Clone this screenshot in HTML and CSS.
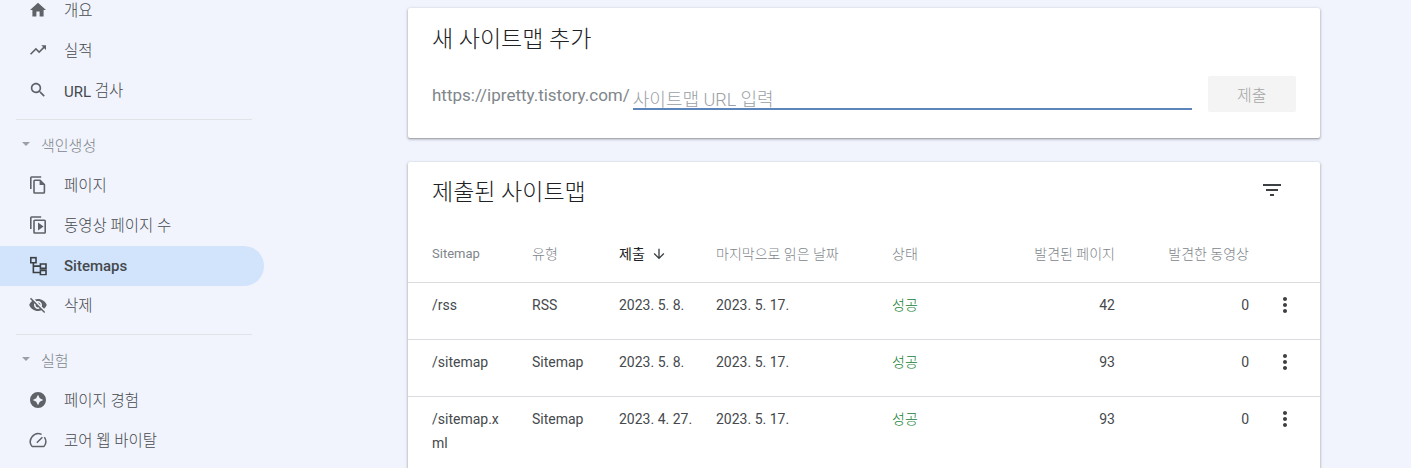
FILE: index.html
```html
<!DOCTYPE html>
<html lang="ko">
<head>
<meta charset="utf-8">
<title>Sitemaps</title>
<link rel="stylesheet" href="styles.css">
</head>
<body>
<div class="page">
  <nav class="sidebar">
    <a class="item"><svg class="icon" viewBox="0 0 24 24"><path d="M10 20v-6h4v6h5v-8h3L12 3 2 12h3v8z"/></svg><span class="label ko">개요</span></a>
    <a class="item"><svg class="icon" viewBox="0 0 24 24"><path d="M16 6l2.29 2.29-4.88 4.88-4-4L2 16.59 3.41 18l6-6 4 4 6.3-6.29L22 12V6z"/></svg><span class="label ko">실적</span></a>
    <a class="item"><svg class="icon" viewBox="0 0 24 24"><path d="M15.5 14h-.79l-.28-.27C15.41 12.59 16 11.11 16 9.5 16 5.91 13.09 3 9.5 3S3 5.91 3 9.5 5.91 16 9.5 16c1.61 0 3.09-.59 4.23-1.57l.27.28v.79l5 4.99L20.49 19l-4.99-5zm-6 0C7.01 14 5 11.99 5 9.5S7.01 5 9.5 5 14 7.01 14 9.5 11.99 14 9.5 14z"/></svg><span class="label">URL <span class="ko">검사</span></span></a>
    <hr class="divider">
    <div class="section"><svg class="caret" viewBox="0 0 10 5"><path d="M0 0l5 5 5-5z"/></svg><span class="ko">색인생성</span></div>
    <a class="item"><svg class="icon" viewBox="0 0 24 24"><path d="M16 1H4c-1.1 0-2 .9-2 2v14h2V3h12V1zm-1 4H8c-1.1 0-1.99.9-1.99 2L6 21c0 1.1.89 2 1.99 2H19c1.1 0 2-.9 2-2V11l-6-6zm4 16H8V7h6v5h5v9z"/></svg><span class="label ko">페이지</span></a>
    <a class="item"><svg class="icon" viewBox="0 0 24 24"><path d="M16 1H4c-1.1 0-2 .9-2 2v14h2V3h12V1zm4 4H8c-1.1 0-2 .9-2 2v14c0 1.1.9 2 2 2h12c1.1 0 2-.9 2-2V7c0-1.1-.9-2-2-2zm0 16H8V7h12v14zm-8-12v10l7-5z"/></svg><span class="label ko">동영상 페이지 수</span></a>
    <a class="item active"><svg class="icon" viewBox="0 0 24 24"><path class="tree" d="M3 1.5h6.500V8H3zM15 9.500h7V15h-7zM15 17.500h7V23h-7zM6.200 8v12.200H15M6.200 12.200H15"/></svg><span class="label">Sitemaps</span></a>
    <a class="item"><svg class="icon" viewBox="0 0 24 24"><path d="M12 7c2.76 0 5 2.24 5 5 0 .65-.13 1.26-.36 1.83l2.92 2.92c1.51-1.26 2.7-2.89 3.43-4.75-1.73-4.39-6-7.5-11-7.5-1.4 0-2.74.25-3.98.7l2.16 2.16C10.74 7.13 11.35 7 12 7zM2 4.27l2.28 2.28.46.46C3.08 8.3 1.78 10.02 1 12c1.73 4.39 6 7.5 11 7.5 1.55 0 3.03-.3 4.38-.84l.42.42L19.73 22 21 20.73 3.27 3 2 4.27zM7.53 9.8l1.55 1.55c-.05.21-.08.43-.08.65 0 1.66 1.34 3 3 3 .22 0 .44-.03.65-.08l1.55 1.55c-.67.33-1.41.53-2.2.53-2.76 0-5-2.24-5-5 0-.79.2-1.53.53-2.2zm4.31-.78l3.15 3.15.02-.16c0-1.66-1.34-3-3-3l-.17.01z"/></svg><span class="label ko">삭제</span></a>
    <hr class="divider">
    <div class="section"><svg class="caret" viewBox="0 0 10 5"><path d="M0 0l5 5 5-5z"/></svg><span class="ko">실험</span></div>
    <a class="item"><svg class="icon" viewBox="0 0 24 24"><path fill-rule="evenodd" d="M12 2a10 10 0 1 0 0 20 10 10 0 0 0 0-20zm0 3.500l2.200 4.300 4.300 2.200-4.300 2.200-2.200 4.300-2.200-4.300L5.500 12l4.300-2.200z"/></svg><span class="label ko">페이지 경험</span></a>
    <a class="item"><svg class="icon" viewBox="0 0 24 24"><path class="gauge" d="M4.500 20.200h15M4.500 20.200A10 10 0 0 1 16.500 5M20 8.500a10 10 0 0 1-.5 11.700M10.500 15.500L17.500 8.500"/></svg><span class="label ko">코어 웹 바이탈</span></a>
  </nav>
  <main class="content">
    <section class="card add-card">
      <h2 class="card-title">새 사이트맵 추가</h2>
      <div class="add-row">
        <span class="prefix">https://ipretty.tistory.com/</span>
        <div class="field"><span class="placeholder">사이트맵 URL 입력</span></div>
        <button class="submit">제출</button>
      </div>
    </section>
    <section class="card list-card">
      <div class="list-head">
        <h2 class="card-title">제출된 사이트맵</h2>
        <svg class="filter" viewBox="0 0 24 24"><path d="M10 18h4v-2h-4v2zM3 6v2h18V6H3zm3 7h12v-2H6v2z"/></svg>
      </div>
      <table class="table">
        <colgroup>
          <col class="c1"><col class="c2"><col class="c3"><col class="c4"><col class="c5"><col class="c6"><col class="c7"><col class="c8">
        </colgroup>
        <thead>
          <tr>
            <th class="first latin">Sitemap</th>
            <th>유형</th>
            <th class="sorted">제출<svg class="arrow" viewBox="0 0 24 24"><path d="M20 12l-1.41-1.41L13 16.17V4h-2v12.17l-5.58-5.59L4 12l8 8 8-8z"/></svg></th>
            <th>마지막으로 읽은 날짜</th>
            <th>상태</th>
            <th class="num">발견된 페이지</th>
            <th class="num">발견한 동영상</th>
            <th></th>
          </tr>
        </thead>
        <tbody>
          <tr>
            <td class="first">/rss</td><td>RSS</td><td>2023. 5. 8.</td><td>2023. 5. 17.</td><td class="ok">성공</td><td class="num">42</td><td class="num">0</td>
            <td class="more"><svg viewBox="0 0 24 24"><path d="M12 8c1.1 0 2-.9 2-2s-.9-2-2-2-2 .9-2 2 .9 2 2 2zm0 2c-1.1 0-2 .9-2 2s.9 2 2 2 2-.9 2-2-.9-2-2-2zm0 6c-1.1 0-2 .9-2 2s.9 2 2 2 2-.9 2-2-.9-2-2-2z"/></svg></td>
          </tr>
          <tr>
            <td class="first">/sitemap</td><td>Sitemap</td><td>2023. 5. 8.</td><td>2023. 5. 17.</td><td class="ok">성공</td><td class="num">93</td><td class="num">0</td>
            <td class="more"><svg viewBox="0 0 24 24"><path d="M12 8c1.1 0 2-.9 2-2s-.9-2-2-2-2 .9-2 2 .9 2 2 2zm0 2c-1.1 0-2 .9-2 2s.9 2 2 2 2-.9 2-2-.9-2-2-2zm0 6c-1.1 0-2 .9-2 2s.9 2 2 2 2-.9 2-2-.9-2-2-2z"/></svg></td>
          </tr>
          <tr>
            <td class="first">/sitemap.xml</td><td>Sitemap</td><td>2023. 4. 27.</td><td>2023. 5. 17.</td><td class="ok">성공</td><td class="num">93</td><td class="num">0</td>
            <td class="more"><svg viewBox="0 0 24 24"><path d="M12 8c1.1 0 2-.9 2-2s-.9-2-2-2-2 .9-2 2 .9 2 2 2zm0 2c-1.1 0-2 .9-2 2s.9 2 2 2 2-.9 2-2-.9-2-2-2zm0 6c-1.1 0-2 .9-2 2s.9 2 2 2 2-.9 2-2-.9-2-2-2z"/></svg></td>
          </tr>
        </tbody>
      </table>
    </section>
  </main>
</div>
</body>
</html>
```
FILE: styles.css
```css
* { box-sizing: border-box; }
html, body { margin: 0; height: 468px; overflow: hidden; }
body { background: #f1f4fd; font-family: Roboto, "Noto Sans CJK KR", sans-serif; color: #3c4043; }
.page { display: flex; align-items: flex-start; }

.sidebar { width: 264px; margin-top: -10px; flex: none; }
.item { display: flex; align-items: center; height: 40px; padding-left: 26px; border-radius: 0 20px 20px 0; font-size: 15px; color: #45494d; }
.label { margin-left: 14px; }
.ko { font-size: 15.5px; font-weight: 300; position: relative; top: -1px; }
.item .icon { width: 24px; height: 24px; fill: #5f6368; flex: none; transform: scale(.8); }
.item.active { background: #d2e3fc; font-weight: 500; margin: 1px 0 -1px; }
.item.active .icon { fill: none; }
.item .icon .tree { fill: none; stroke: #3c4043; stroke-width: 2; }
.item .icon .gauge { fill: none; stroke: #5f6368; stroke-width: 1.9; }
.divider { border: 0; border-top: 1px solid #e0e3e8; margin: 9px 12px 5px 16px; height: 0; }
.section { display: flex; align-items: center; height: 40px; padding-left: 22px; color: #80868b; }
.section .ko { margin-left: 11px; font-size: 15px; }
.caret { width: 8px; height: 4px; fill: #9aa0a6; position: relative; top: -1px; }

.content { margin-left: 144px; width: 912px; padding-top: 8px; flex: none; }
.card { background: #fff; border-radius: 2px; box-shadow: 0 1px 2px rgba(60,64,67,.45), 0 1px 3px 1px rgba(60,64,67,.12); }
.add-card { height: 130px; padding: 16px 24px 0; margin-bottom: 24px; }
.card-title { margin: 0; font-size: 23px; font-weight: 300; line-height: 32px; color: #202124; }
.add-row { display: flex; align-items: flex-start; margin-top: 20px; }
.prefix { font-size: 17px; line-height: 24px; color: #80868b; margin-right: 3px; margin-top: 7px; }
.field { width: 559px; height: 34px; border-bottom: 2px solid #5c85bb; padding-top: 12px; font-size: 18px; font-weight: 300; line-height: 24px; color: #9aa0a6; white-space: nowrap; }
.submit { margin-left: 16px; width: 88px; height: 36px; border: 0; border-radius: 2px; background: #f4f4f4; color: #a6a6a6; font: inherit; font-size: 16px; font-weight: 300; }

.list-head { display: flex; justify-content: space-between; align-items: flex-start; padding: 15px 36px 0 24px; height: 68px; }
.filter { width: 24px; height: 24px; fill: #3c4043; margin-top: 1px; }
.list-card { min-height: 320px; }
.table { width: 912px; border-collapse: collapse; table-layout: fixed; font-size: 14px; }
.c1 { width: 124px; } .c2 { width: 87px; } .c3 { width: 97px; } .c4 { width: 176px; } .c5 { width: 100px; } .c6 { width: 123px; } .c7 { width: 134px; } .c8 { width: 71px; }
.table th { height: 52px; font-size: 14px; font-weight: 300; color: #80868b; text-align: left; padding: 0 0 6px; border-bottom: 1px solid #dadce0; }
.table th.latin { font-size: 13px; font-weight: 400; padding-bottom: 4px; }
.table th.sorted { color: #202124; font-weight: 400; }
.table th.num, .table td.num { text-align: right; }
.arrow { width: 16px; height: 16px; fill: #3c4043; vertical-align: -3px; margin-left: 6px; }
.table td { height: 57px; padding: 12px 0 0; vertical-align: top; line-height: 20px; color: #45494d; border-bottom: 1px solid #dadce0; }
.table .first { padding-left: 24px; }
.table td.first { word-break: break-all; padding-right: 24px; line-height: 24px; padding-top: 10px; }
.table td.ok { color: #188038; font-weight: 300; }
.table td.more { text-align: center; padding-top: 10px; }
.table tr:last-child td { border-bottom: 0; }
.more svg { width: 24px; height: 24px; fill: #3c4043; display: inline-block; }
```
